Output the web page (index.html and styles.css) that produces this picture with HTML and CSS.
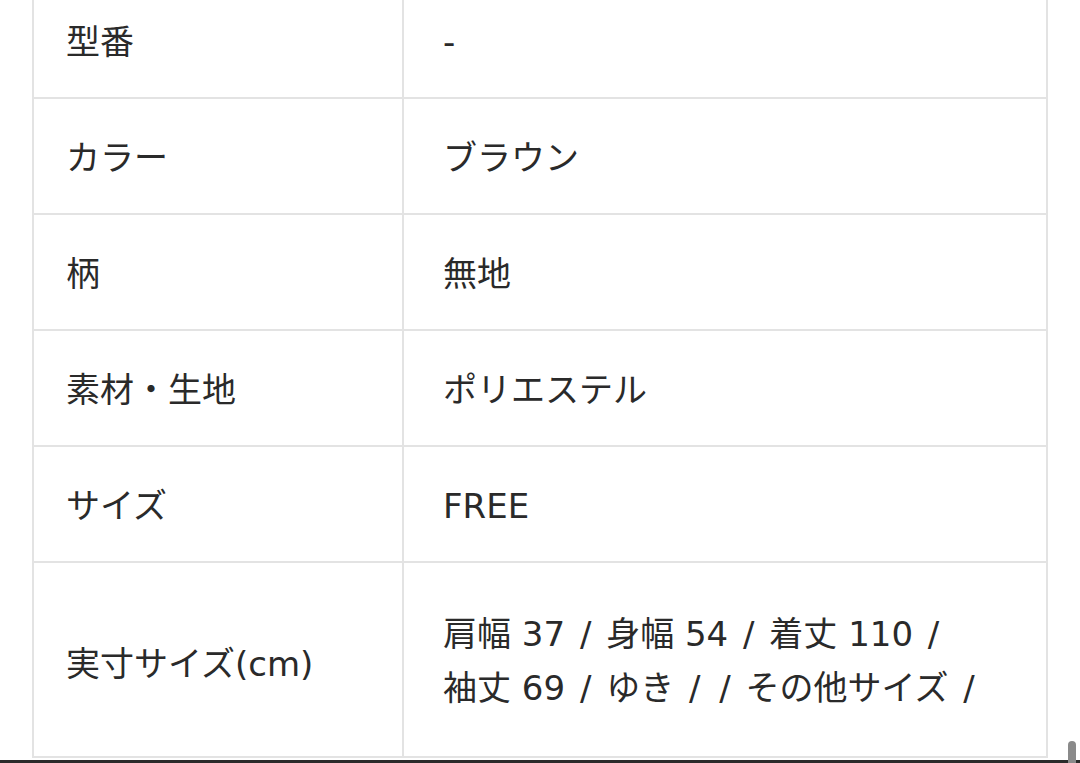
FILE: index.html
```html
<!DOCTYPE html>
<html lang="ja">
<head>
<meta charset="utf-8">
<link rel="stylesheet" href="styles.css">
</head>
<body>
<div class="page">
  <table class="spec">
    <tbody>
      <tr><th>型番</th><td>-</td></tr>
      <tr><th>カラー</th><td>ブラウン</td></tr>
      <tr><th>柄</th><td>無地</td></tr>
      <tr><th>素材・生地</th><td>ポリエステル</td></tr>
      <tr><th>サイズ</th><td>FREE</td></tr>
      <tr class="tall"><th>実寸サイズ(cm)</th><td>肩幅 37 <span class="sep">/</span> 身幅 54 <span class="sep">/</span> 着丈 110 <span class="sep">/</span><br>袖丈 69 <span class="sep">/</span> ゆき <span class="sep">/</span> <span class="sep">/</span> その他サイズ <span class="sep">/</span></td></tr>
    </tbody>
  </table>
  <div class="bottom-bar"></div>
  <div class="scroll-thumb"></div>
</div>
</body>
</html>
```

FILE: styles.css
```css
html, body {
  margin: 0;
  padding: 0;
  background: #ffffff;
}

.page {
  position: relative;
  width: 1080px;
  height: 763px;
  overflow: hidden;
  font-family: "DejaVu Sans", "Noto Sans CJK JP", sans-serif;
  color: #2a2a2a;
}

.spec {
  border-collapse: collapse;
  margin: -19px 0 0 32px;
  width: 1016px;
  table-layout: fixed;
}

.spec th,
.spec td {
  box-sizing: border-box;
  border: 2px solid #e3e3e3;
  height: 116px;
  padding: 3px 0 0 0;
  font-size: 34px;
  font-weight: normal;
  line-height: 54px;
  text-align: left;
  vertical-align: middle;
}

.spec th {
  width: 370px;
  padding-left: 32px;
}

.spec td {
  padding-left: 39px;
}

.spec .sep {
  margin: 0 4px;
}

.spec tr.tall th,
.spec tr.tall td {
  height: 195px;
}

.spec tr.tall th {
  padding-top: 8px;
}

.bottom-bar {
  position: absolute;
  left: 0;
  right: 0;
  top: 760px;
  height: 3px;
  background: #2b2b2b;
}

.scroll-thumb {
  position: absolute;
  left: 1068px;
  top: 741px;
  width: 8px;
  height: 22px;
  border-radius: 4px 4px 0 0;
  background: #8a8a8a;
}
```
